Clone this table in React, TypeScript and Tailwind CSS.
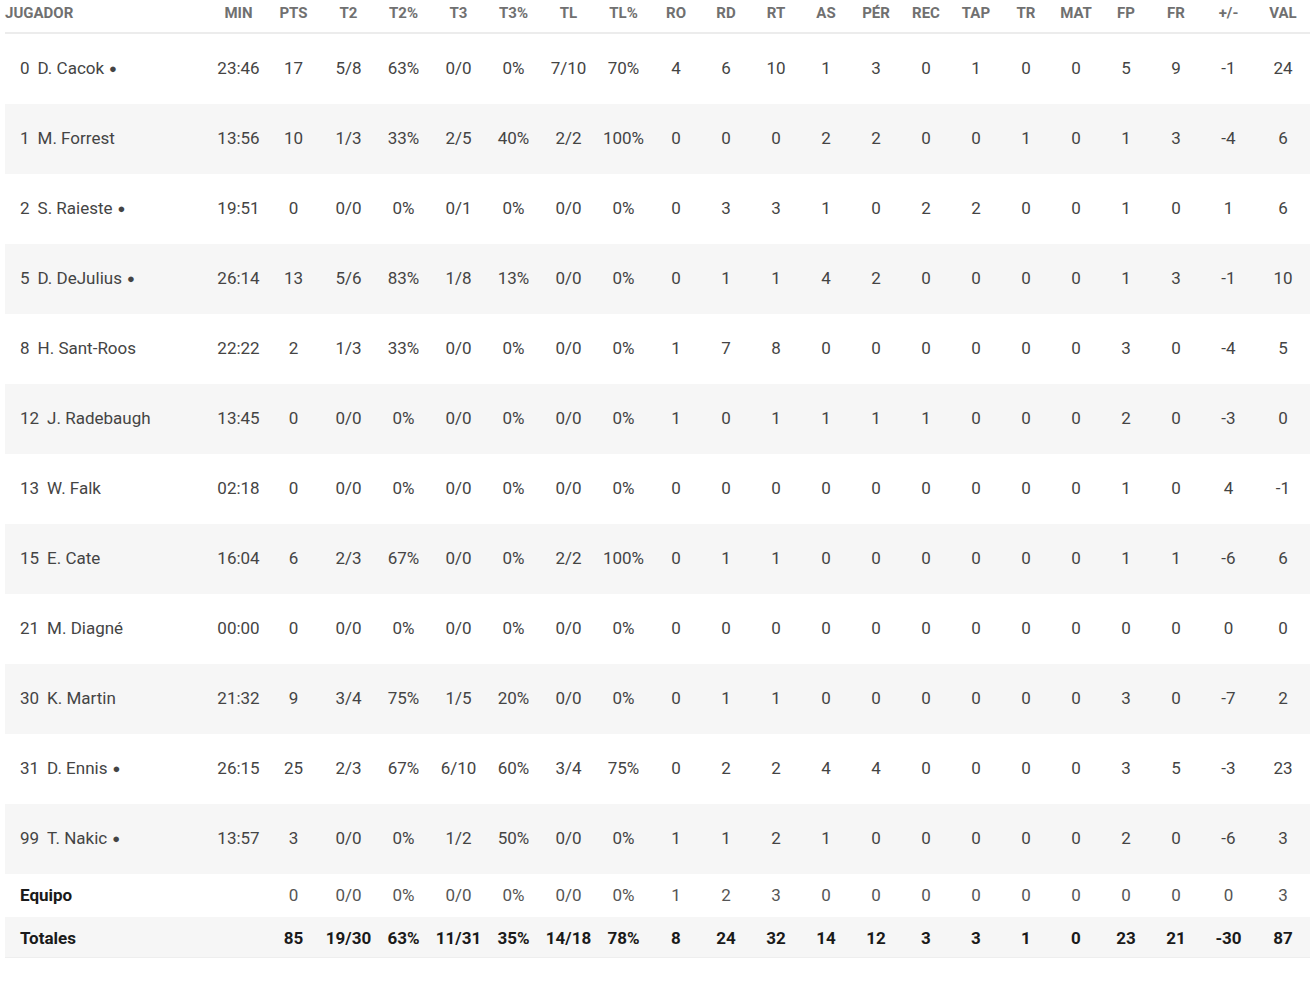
const cols = ["MIN", "PTS", "T2", "T2%", "T3", "T3%", "TL", "TL%", "RO", "RD", "RT", "AS", "PÉR", "REC", "TAP", "TR", "MAT", "FP", "FR", "+/-", "VAL"];

type Row = { num: string; name: string; starter?: boolean; stats: string[] };

const players: Row[] = [
  { num: "0", name: "D. Cacok", starter: true, stats: "23:46 17 5/8 63% 0/0 0% 7/10 70% 4 6 10 1 3 0 1 0 0 5 9 -1 24".split(" ") },
  { num: "1", name: "M. Forrest", stats: "13:56 10 1/3 33% 2/5 40% 2/2 100% 0 0 0 2 2 0 0 1 0 1 3 -4 6".split(" ") },
  { num: "2", name: "S. Raieste", starter: true, stats: "19:51 0 0/0 0% 0/1 0% 0/0 0% 0 3 3 1 0 2 2 0 0 1 0 1 6".split(" ") },
  { num: "5", name: "D. DeJulius", starter: true, stats: "26:14 13 5/6 83% 1/8 13% 0/0 0% 0 1 1 4 2 0 0 0 0 1 3 -1 10".split(" ") },
  { num: "8", name: "H. Sant-Roos", stats: "22:22 2 1/3 33% 0/0 0% 0/0 0% 1 7 8 0 0 0 0 0 0 3 0 -4 5".split(" ") },
  { num: "12", name: "J. Radebaugh", stats: "13:45 0 0/0 0% 0/0 0% 0/0 0% 1 0 1 1 1 1 0 0 0 2 0 -3 0".split(" ") },
  { num: "13", name: "W. Falk", stats: "02:18 0 0/0 0% 0/0 0% 0/0 0% 0 0 0 0 0 0 0 0 0 1 0 4 -1".split(" ") },
  { num: "15", name: "E. Cate", stats: "16:04 6 2/3 67% 0/0 0% 2/2 100% 0 1 1 0 0 0 0 0 0 1 1 -6 6".split(" ") },
  { num: "21", name: "M. Diagné", stats: "00:00 0 0/0 0% 0/0 0% 0/0 0% 0 0 0 0 0 0 0 0 0 0 0 0 0".split(" ") },
  { num: "30", name: "K. Martin", stats: "21:32 9 3/4 75% 1/5 20% 0/0 0% 0 1 1 0 0 0 0 0 0 3 0 -7 2".split(" ") },
  { num: "31", name: "D. Ennis", starter: true, stats: "26:15 25 2/3 67% 6/10 60% 3/4 75% 0 2 2 4 4 0 0 0 0 3 5 -3 23".split(" ") },
  { num: "99", name: "T. Nakic", starter: true, stats: "13:57 3 0/0 0% 1/2 50% 0/0 0% 1 1 2 1 0 0 0 0 0 2 0 -6 3".split(" ") },
];

// first entry is the empty MIN cell
const team = " 0 0/0 0% 0/0 0% 0/0 0% 1 2 3 0 0 0 0 0 0 0 0 0 3".split(" ");
const totals = " 85 19/30 63% 11/31 35% 14/18 78% 8 24 32 14 12 3 3 1 0 23 21 -30 87".split(" ");

const grid = "grid grid-cols-[206px_repeat(8,55px)_repeat(11,50px)_55px_54px]";

export default function App() {
  return (
    <div className="min-h-[991px] bg-white font-['Roboto',sans-serif]">
      <div className="ml-[5px] w-[1305px]">
        <div className={`${grid} h-[34px] items-start border-b-2 border-[#ececec] pt-[2px] text-[15px] font-bold text-[#707070]`}>
          <div>JUGADOR</div>
          {cols.map((c) => (
            <div key={c} className="text-center">{c}</div>
          ))}
        </div>

        {players.map((p, i) => (
          <div key={p.num} className={`${grid} h-[70px] items-center text-[17px] text-[#444] ${i % 2 ? "bg-[#f6f6f6]" : "bg-white"}`}>
            <div className="flex items-center pl-[15px]">
              <span>{p.num}</span>
              <span className="ml-[8px]">{p.name}</span>
              {p.starter && <span className="ml-[5px] text-[13px]">●</span>}
            </div>
            {p.stats.map((s, j) => (
              <div key={j} className="text-center">{s}</div>
            ))}
          </div>
        ))}

        <div className={`${grid} h-[43px] items-center text-[17px] text-[#555]`}>
          <div className="pl-[15px] font-bold text-[#1a1a1a]">Equipo</div>
          {team.map((s, j) => (
            <div key={j} className="text-center">{s}</div>
          ))}
        </div>

        <div className={`${grid} h-[41px] items-center border-b border-[#eeeeee] bg-[#f6f6f6] pt-[4px] text-[17px] font-bold text-[#1a1a1a]`}>
          <div className="pl-[15px]">Totales</div>
          {totals.map((s, j) => (
            <div key={j} className="text-center">{s}</div>
          ))}
        </div>
      </div>
    </div>
  );
}
